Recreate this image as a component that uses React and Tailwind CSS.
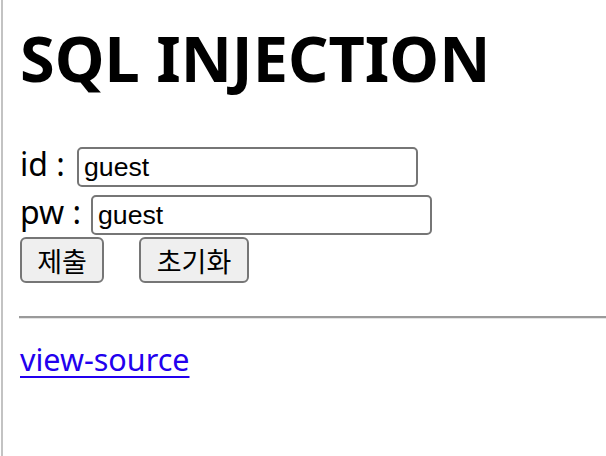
export default function App() {
  return (
    <div className="w-[606px] h-[456px] overflow-hidden bg-white">
      <div className="ml-px h-[456px] border-l-2 border-[#c3c3c3] pl-[17px] text-black" style={{ fontFamily: '"Noto Sans", "Noto Sans CJK KR", sans-serif' }}>
        <h1 className="pt-[18px] h-[122px] text-[63px] font-bold leading-[80px]" style={{ fontFamily: '"Noto Sans", sans-serif' }}>
          SQL INJECTION
        </h1>
        <form className="pt-[22px]" onSubmit={(e) => e.preventDefault()}>
          <div className="flex items-baseline h-[48px] text-[32px] leading-[40px]">
            <span className="w-[57px] shrink-0">id :</span>
            <input
              defaultValue="guest"
              className="w-[341px] h-[40px] border-2 border-[#767676] rounded-[5px] px-[5px] text-[26.67px] bg-white outline-none"
              style={{ fontFamily: '"Liberation Sans", Arial, sans-serif' }}
            />
          </div>
          <div className="flex items-baseline h-[45px] text-[32px] leading-[40px]">
            <span className="w-[71px] shrink-0">pw :</span>
            <input
              defaultValue="guest"
              className="w-[341px] h-[40px] border-2 border-[#767676] rounded-[5px] px-[5px] text-[26.67px] bg-white outline-none"
              style={{ fontFamily: '"Liberation Sans", Arial, sans-serif' }}
            />
          </div>
          <div className="flex items-start gap-[35px]">
            <button type="submit" className="w-[84px] h-[46px] border-2 border-[#767676] rounded-[6px] bg-[#efefef] text-[27px] leading-none text-black" style={{ fontFamily: '"Noto Sans CJK KR", sans-serif' }}>
              제출
            </button>
            <button type="reset" className="w-[110px] h-[46px] border-2 border-[#767676] rounded-[6px] bg-[#efefef] text-[27px] leading-none text-black" style={{ fontFamily: '"Noto Sans CJK KR", sans-serif' }}>
              초기화
            </button>
          </div>
        </form>
        <div className="mt-[33px] -ml-px h-[3px] border-t-2 border-[#9a9a9a] border-b border-b-[#e4e4e4]" />
        <div className="mt-[20px]">
          <a href="#" className="text-[30.5px] leading-[40px] text-[#2200ee] underline decoration-2 underline-offset-[5px]">view-source</a>
        </div>
      </div>
    </div>
  );
}
